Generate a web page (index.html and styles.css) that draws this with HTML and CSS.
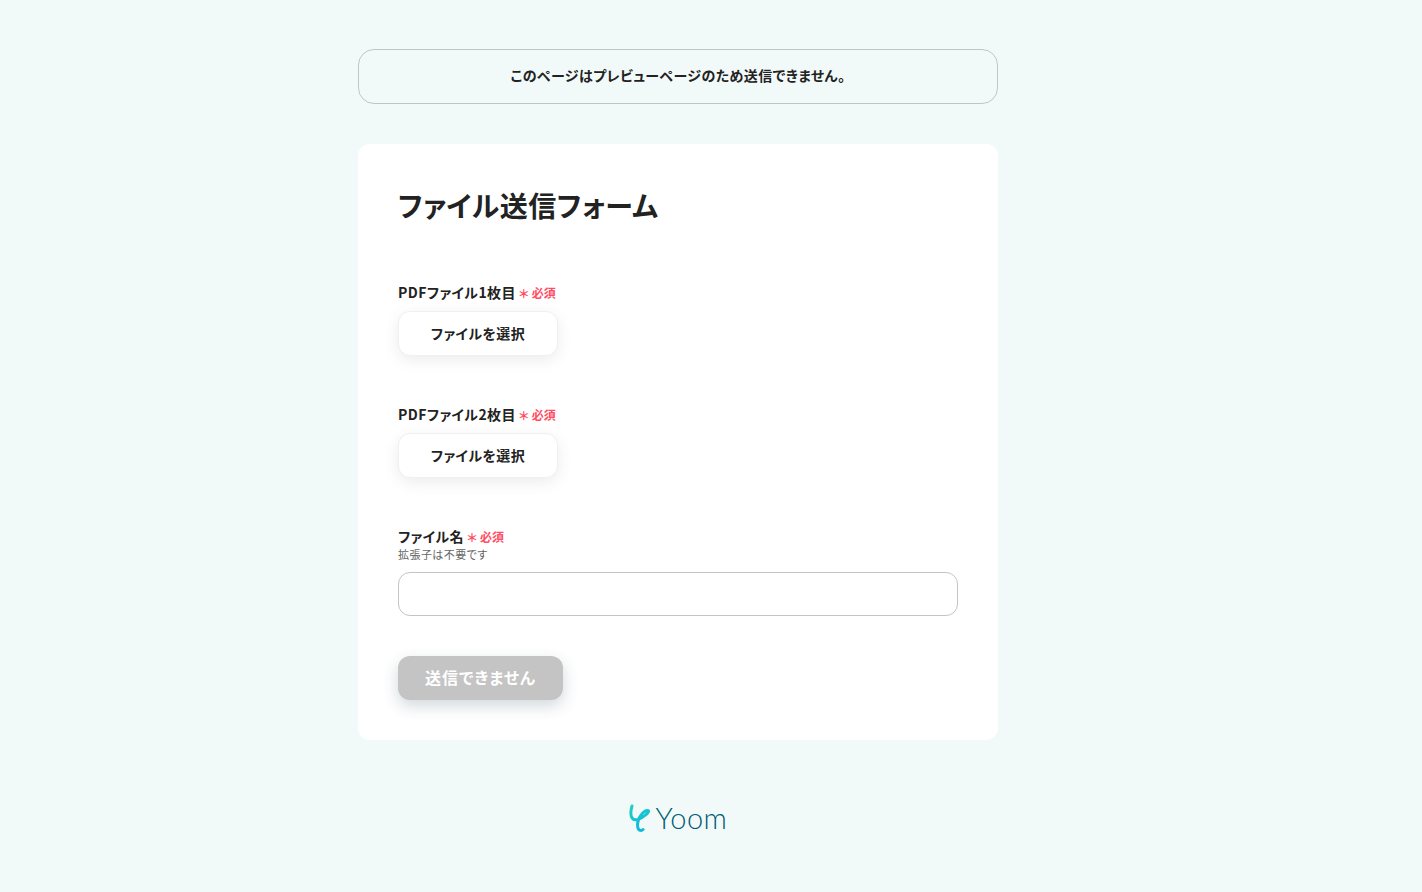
FILE: index.html
```html
<!DOCTYPE html>
<html lang="ja">
<head>
  <meta charset="UTF-8" />
  <meta name="viewport" content="width=device-width, initial-scale=1" />
  <title>ファイル送信フォーム</title>
  <link rel="stylesheet" href="styles.css">
</head>
<body>
  <div class="page">
    <div class="notice">このページはプレビューページのため送信できません。</div>

    <form class="form-card">
      <h1>ファイル送信フォーム</h1>

      <div class="field">
        <div class="label">PDFファイル1枚目<span class="star">＊</span><span class="required">必須</span></div>
        <button type="button" class="file-btn">ファイルを選択</button>
      </div>

      <div class="field">
        <div class="label">PDFファイル2枚目<span class="star">＊</span><span class="required">必須</span></div>
        <button type="button" class="file-btn">ファイルを選択</button>
      </div>

      <div class="field last">
        <div class="label">ファイル名<span class="star">＊</span><span class="required">必須</span></div>
        <div class="hint">拡張子は不要です</div>
        <input type="text" class="text-input">
      </div>

      <button type="button" class="submit-btn" disabled>送信できません</button>
    </form>

    <div class="logo">
      <svg class="logo-mark" width="22" height="30" viewBox="0 0 22 30" fill="none">
        <defs>
          <linearGradient id="mark" x1="0" y1="0" x2="0.4" y2="1">
            <stop offset="0" stop-color="#1fd0c0"/>
            <stop offset="1" stop-color="#10b8e0"/>
          </linearGradient>
        </defs>
        <path d="M3 3C1.5 8 1.5 13 3.5 15.5C6 18.5 12 16 16.5 12C19.5 9.5 20.5 7.5 18.5 7.5C14.5 7.5 8.5 15 8.5 21.5C8.5 25.5 10 27.5 12 27.5C13 27.5 13.5 27 14 26.5" stroke="url(#mark)" stroke-width="3" stroke-linecap="round"/>
      </svg>
      <span class="logo-text">Yoom</span>
    </div>
  </div>
</body>
</html>
```

FILE: styles.css
```css
* {
  box-sizing: border-box;
}
body {
  margin: 0;
  background: #f2faf9;
  color: #222;
  font-family: "Noto Sans CJK JP", "Noto Sans", sans-serif;
}
.page {
  width: 640px;
  margin-left: 358px;
  padding-top: 49px;
  padding-bottom: 58px;
}
.notice {
  height: 55px;
  line-height: 51px;
  border: 1px solid #c4c4c4;
  border-radius: 16px;
  text-align: center;
  font-size: 14px;
  font-weight: 700;
  font-feature-settings: "palt";
  letter-spacing: 0.03em;
}
.form-card {
  margin-top: 40px;
  padding: 40px;
  height: 596px;
  background: #fff;
  border-radius: 12px;
}
h1 {
  margin: 0 0 54px;
  height: 44px;
  line-height: 42px;
  font-size: 28px;
  font-weight: 700;
  font-feature-settings: "palt";
  letter-spacing: 0.017em;
}
.field {
  margin-bottom: 48px;
}
.field.last {
  margin-bottom: 40px;
}
.label {
  height: 20px;
  line-height: 20px;
  font-size: 14px;
  font-weight: 700;
  font-feature-settings: "palt";
  letter-spacing: 0.03em;
}
.star {
  margin-left: 3px;
  color: #ff4d63;
  font-size: 12px;
  font-weight: 700;
  letter-spacing: 0;
  position: relative;
  top: 1px;
}
.required {
  margin-left: 3px;
  color: #ff4d63;
  font-size: 12px;
  font-weight: 700;
  letter-spacing: 0;
}
.file-btn {
  display: block;
  width: 160px;
  height: 45px;
  margin-top: 9px;
  padding-bottom: 3px;
  background: #fff;
  border: 1px solid #f0f0f0;
  border-radius: 12px;
  box-shadow: 0 4px 16px rgba(0,0,0,0.08);
  color: #222;
  font-family: inherit;
  font-size: 14px;
  font-weight: 700;
  font-feature-settings: "palt";
  letter-spacing: 0.03em;
}
.hint {
  height: 16px;
  line-height: 14px;
  margin-top: 1px;
  font-size: 11px;
  color: #666;
  font-feature-settings: "palt";
  letter-spacing: 0.04em;
}
.text-input {
  display: block;
  width: 560px;
  height: 44px;
  margin-top: 9px;
  background: #fff;
  border: 1px solid #c4c4c4;
  border-radius: 12px;
}
.submit-btn {
  display: block;
  width: 165px;
  height: 44px;
  padding-bottom: 3px;
  background: #c4c4c4;
  border: none;
  border-radius: 12px;
  box-shadow: 0 6px 16px rgba(30,60,70,0.2);
  color: #fff;
  font-family: inherit;
  font-size: 16px;
  font-weight: 700;
  font-feature-settings: "palt";
  letter-spacing: 0.06em;
}
.logo {
  display: flex;
  align-items: center;
  justify-content: center;
  gap: 5px;
  margin-top: 63px;
  height: 30px;
}
.logo-text {
  color: #005a75;
  font-family: "Lato", sans-serif;
  font-size: 29px;
  font-weight: 300;
  letter-spacing: 0.5px;
  line-height: 30px;
}
```
